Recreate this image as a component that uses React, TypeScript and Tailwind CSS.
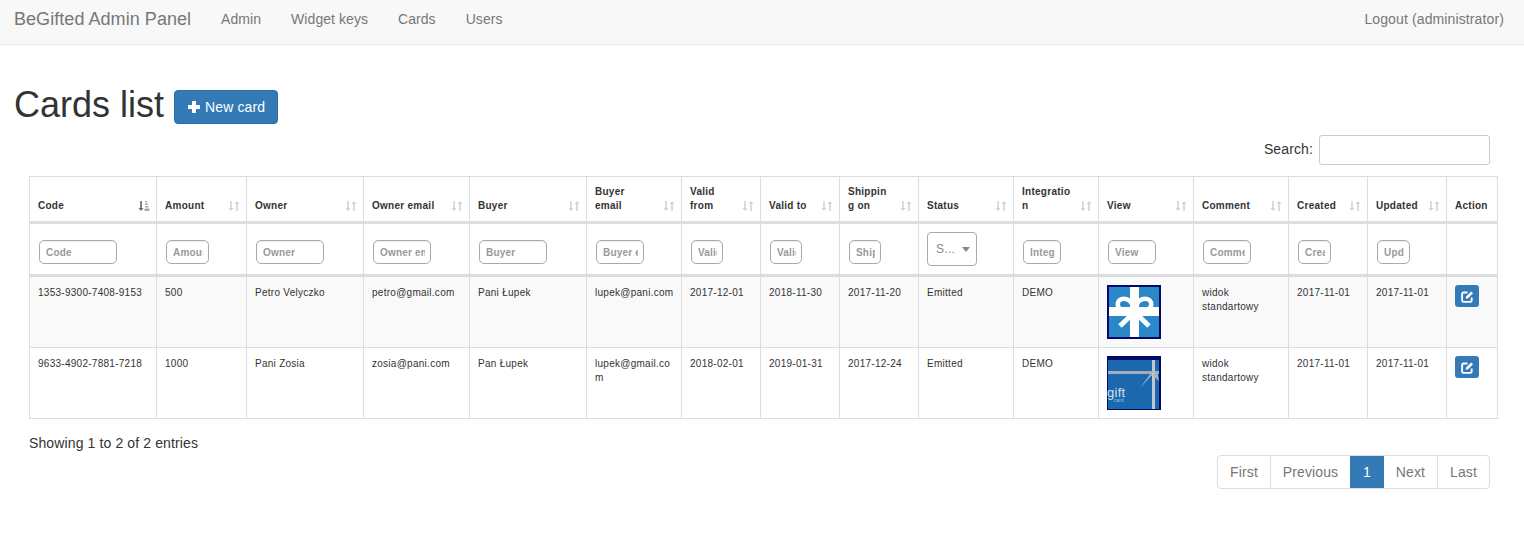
import React from 'react';

const font = { fontFamily: '"Liberation Sans", Arial, sans-serif' };

const columns = [
  { name: 'Code', width: 'w-[127px]', filter: 'Code', input: 'w-[78px]' },
  { name: 'Amount', width: 'w-[90px]', filter: 'Amount', input: 'w-[43px]' },
  { name: 'Owner', width: 'w-[117px]', filter: 'Owner', input: 'w-[68px]' },
  { name: 'Owner email', width: 'w-[106px]', filter: 'Owner email', input: 'w-[58px]' },
  { name: 'Buyer', width: 'w-[117px]', filter: 'Buyer', input: 'w-[68px]' },
  { name: 'Buyer email', width: 'w-[95px]', filter: 'Buyer email', input: 'w-[48px]' },
  { name: 'Valid from', width: 'w-[79px]', filter: 'Valid from', input: 'w-[32px]' },
  { name: 'Valid to', width: 'w-[79px]', filter: 'Valid to', input: 'w-[32px]' },
  { name: 'Shipping on', width: 'w-[79px]', filter: 'Shipping on', input: 'w-[32px]' },
  { name: 'Status', width: 'w-[95px]', filter: '', input: '' },
  { name: 'Integration', width: 'w-[85px]', filter: 'Integration', input: 'w-[38px]' },
  { name: 'View', width: 'w-[95px]', filter: 'View', input: 'w-[48px]' },
  { name: 'Comment', width: 'w-[95px]', filter: 'Comment', input: 'w-[48px]' },
  { name: 'Created', width: 'w-[79px]', filter: 'Created', input: 'w-[33px]' },
  { name: 'Updated', width: 'w-[79px]', filter: 'Updated', input: 'w-[33px]' },
  { name: 'Action', width: 'w-[51px]', filter: '', input: '' },
];

const rows = [
  {
    cells: ['1353-9300-7408-9153', '500', 'Petro Velyczko', 'petro@gmail.com', 'Pani Łupek', 'lupek@pani.com', '2017-12-01', '2018-11-30', '2017-11-20', 'Emitted', 'DEMO'],
    image: 'bow',
    className: 'h-[72px] bg-[#f9f9f9]',
  },
  {
    cells: ['9633-4902-7881-7218', '1000', 'Pani Zosia', 'zosia@pani.com', 'Pan Łupek', 'lupek@gmail.com', '2018-02-01', '2019-01-31', '2017-12-24', 'Emitted', 'DEMO'],
    image: 'gift',
    className: 'h-[71px] bg-white',
  },
];

const SortIcon = ({ active }: { active?: boolean }) => (
  <svg viewBox="0 0 12 12" className="absolute right-[6px] bottom-[9px] h-[12px] w-[12px]">
    {active ? (
      <g>
        <path d="M2.200 1h1.600v7h1.700L3 11 .5 8h1.700z" fill="#666" />
        <path d="M7 1h2v1.500H7zM7 3.500h3v1.500H7zM7 6h3.500v1.500H7zM6.500 8.500h5V11h-5z" fill="#aaa" />
      </g>
    ) : (
      <g fill="#d3d3d3">
        <path d="M2.200 1h1.600v7h1.700L3 11 .5 8h1.700z" />
        <path d="M8.200 11h1.600V4h1.700L9 1 6.500 4h1.700z" />
      </g>
    )}
  </svg>
);

const EditIcon = () => (
  <svg viewBox="0 0 14 14" className="h-[13px] w-[13px]" fill="none" stroke="#fff">
    <path d="M11.500 8v3.200a1.600 1.600 0 0 1-1.600 1.600H2.800a1.600 1.600 0 0 1-1.600-1.600V4.300a1.600 1.600 0 0 1 1.600-1.600H7" strokeWidth="2" />
    <path d="M5 9.500l.5-2.600 5.400-5.400 2.100 2.100-5.400 5.400z" fill="#fff" stroke="none" />
  </svg>
);

const BowCard = () => (
  <svg viewBox="0 0 54 54" className="block h-[54px] w-[54px]">
    <rect width="54" height="54" fill="#000a66" />
    <rect x="2" y="2" width="50" height="50" fill="#2a87c8" />
    <rect x="23" y="2" width="9" height="50" fill="#fff" />
    <rect x="2" y="22" width="50" height="9" fill="#fff" />
    <g fill="none" stroke="#fff" strokeWidth="4.500">
      <ellipse cx="18" cy="20" rx="7.500" ry="6" transform="rotate(20 18 20)" />
      <ellipse cx="37" cy="20" rx="7.500" ry="6" transform="rotate(-20 37 20)" />
      <path d="M27.500 27L13 41M27.500 27L42 41" strokeWidth="5" />
    </g>
  </svg>
);

const GiftCard = () => (
  <svg viewBox="0 0 54 54" className="block h-[54px] w-[54px]">
    <rect width="54" height="54" fill="#000a66" />
    <rect x="1" y="4" width="51" height="49" fill="#1c68ae" />
    <rect x="1" y="15" width="51" height="3" fill="#a3acb8" />
    <rect x="45" y="4" width="3" height="49" fill="#c0c7d0" />
    <path d="M33 32l11-15 8-1-8 4zM42 16l10 9-2-10z" fill="#a9b3bf" />
    <text x="0" y="41" fill="#d4e2f0" fontSize="13" style={font}>gift</text>
    <text x="7" y="46" fill="#a9c6e4" fontSize="4.500" style={font}>card</text>
  </svg>
);

const FilterInput = ({ placeholder, width }: { placeholder: string; width: string }) => (
  <input
    placeholder={placeholder}
    readOnly
    className={`${width} block h-[24px] rounded-[5px] border border-[#aaaaaa] bg-white pl-[6px] pr-[5px] text-[10px] font-bold tracking-[0.2px] text-[#555] shadow-[inset_0_1px_1px_rgba(0,0,0,0.08)] outline-none placeholder:text-[#999]`}
  />
);

const pages = [
  { label: 'First', className: 'w-[52px]' },
  { label: 'Previous', className: 'w-[80px] border-l border-[#ddd]' },
  { label: '1', className: 'w-[34px] bg-[#337ab7] text-white' },
  { label: 'Next', className: 'w-[53px]' },
  { label: 'Last', className: 'w-[52px] border-l border-[#ddd]' },
];

const cellClass = 'border border-[#ddd] pl-[8px] pr-[6px] align-top';

export default function App() {
  return (
    <div className="min-h-[536px] bg-white text-[14px] tracking-[0.12px] text-[#333]" style={font}>
      <nav className="flex h-[45px] items-center justify-between border-b border-[#e7e7e7] bg-[#f8f8f8] pb-[6px] text-[#777]">
        <div className="flex items-center tracking-[0.06px]">
          <span className="ml-[14px] mr-[15px] text-[18px] tracking-[0.05px]">BeGifted Admin Panel</span>
          <a className="px-[15px]">Admin</a>
          <a className="px-[15px]">Widget keys</a>
          <a className="px-[15px]">Cards</a>
          <a className="px-[15px]">Users</a>
        </div>
        <a className="pr-[20px]">Logout (administrator)</a>
      </nav>

      <div className="mt-[40px] flex items-start pl-[14px]">
        <h1 className="text-[36px] leading-[40px] tracking-normal">Cards list</h1>
        <button className="ml-[10px] mt-[5px] flex h-[34px] items-center gap-[4px] rounded-[4px] border border-[#2e6da4] bg-[#337ab7] px-[12px] text-white">
          <svg viewBox="0 0 14 14" className="h-[14px] w-[14px]" fill="#fff">
            <path d="M5 1h4v4h4v4H9v4H5V9H1V5h4z" />
          </svg>
          New card
        </button>
      </div>

      <div className="mt-[10px] flex items-center justify-end gap-[6px] pr-[34px]">
        <label className="pb-[2px]">Search:</label>
        <input className="h-[30px] w-[171px] rounded-[3px] border border-[#ccc] bg-white" readOnly />
      </div>

      <div className="mt-[11px] pl-[29px]">
        <table className="w-[1469px] table-fixed border-collapse text-[10px] leading-[14px] tracking-[0.27px] text-[#333]">
          <colgroup>
            {columns.map((c) => (
              <col key={c.name} className={c.width} />
            ))}
          </colgroup>
          <thead>
            <tr>
              {columns.map((c, i) => (
                <th
                  key={c.name}
                  className="relative h-[46px] border border-b-[3px] border-[#ddd] px-[8px] pb-[8px] pt-[7px] text-left align-bottom font-bold [overflow-wrap:anywhere]"
                >
                  <div className={c.name === 'Action' ? 'whitespace-nowrap' : 'pr-[19px]'}>{c.name}</div>
                  {c.name !== 'Action' && <SortIcon active={i === 0} />}
                </th>
              ))}
            </tr>
            <tr>
              {columns.map((c) => (
                <th
                  key={c.name}
                  className={`h-[53px] border border-b-[3px] border-[#ddd] text-left align-top font-bold ${c.name === 'Status' ? 'px-[8px] pt-[8px]' : 'px-[9px] pt-[16px]'}`}
                >
                  {c.name === 'Status' ? (
                    <div className="flex h-[34px] w-[50px] items-center justify-between rounded-[4px] border border-[#aaa] bg-white pl-[8px] pr-[6px] text-[12px] font-normal text-[#888]">
                      <span>S...</span>
                      <span className="h-0 w-0 border-x-[4px] border-t-[5px] border-x-transparent border-t-[#888]" />
                    </div>
                  ) : c.filter ? (
                    <FilterInput placeholder={c.filter} width={c.input} />
                  ) : null}
                </th>
              ))}
            </tr>
          </thead>
          <tbody>
            {rows.map((r) => (
              <tr key={r.cells[0]} className={r.className}>
                {r.cells.map((cell, i) => (
                  <td key={i} className={`${cellClass} pt-[9px] [overflow-wrap:anywhere]`}>
                    {cell}
                  </td>
                ))}
                <td className={`${cellClass} pt-[8px]`}>
                  {r.image === 'bow' ? <BowCard /> : <GiftCard />}
                </td>
                <td className={`${cellClass} pt-[9px]`}>widok standartowy</td>
                <td className={`${cellClass} pt-[9px]`}>2017-11-01</td>
                <td className={`${cellClass} pt-[9px]`}>2017-11-01</td>
                <td className={`${cellClass} pt-[8px]`}>
                  <button className="flex h-[22px] w-[24px] items-center justify-center rounded-[3px] bg-[#337ab7]">
                    <EditIcon />
                  </button>
                </td>
              </tr>
            ))}
          </tbody>
        </table>
      </div>

      <div className="mt-[14px] pl-[29px]">Showing 1 to 2 of 2 entries</div>

      <div className="mt-[1px] flex justify-end pr-[34px]">
        <div className="flex h-[34px] overflow-hidden rounded-[4px] border border-[#ddd] text-[#777]">
          {pages.map((p) => (
            <a key={p.label} className={`flex items-center justify-center ${p.className}`}>
              {p.label}
            </a>
          ))}
        </div>
      </div>
    </div>
  );
}
